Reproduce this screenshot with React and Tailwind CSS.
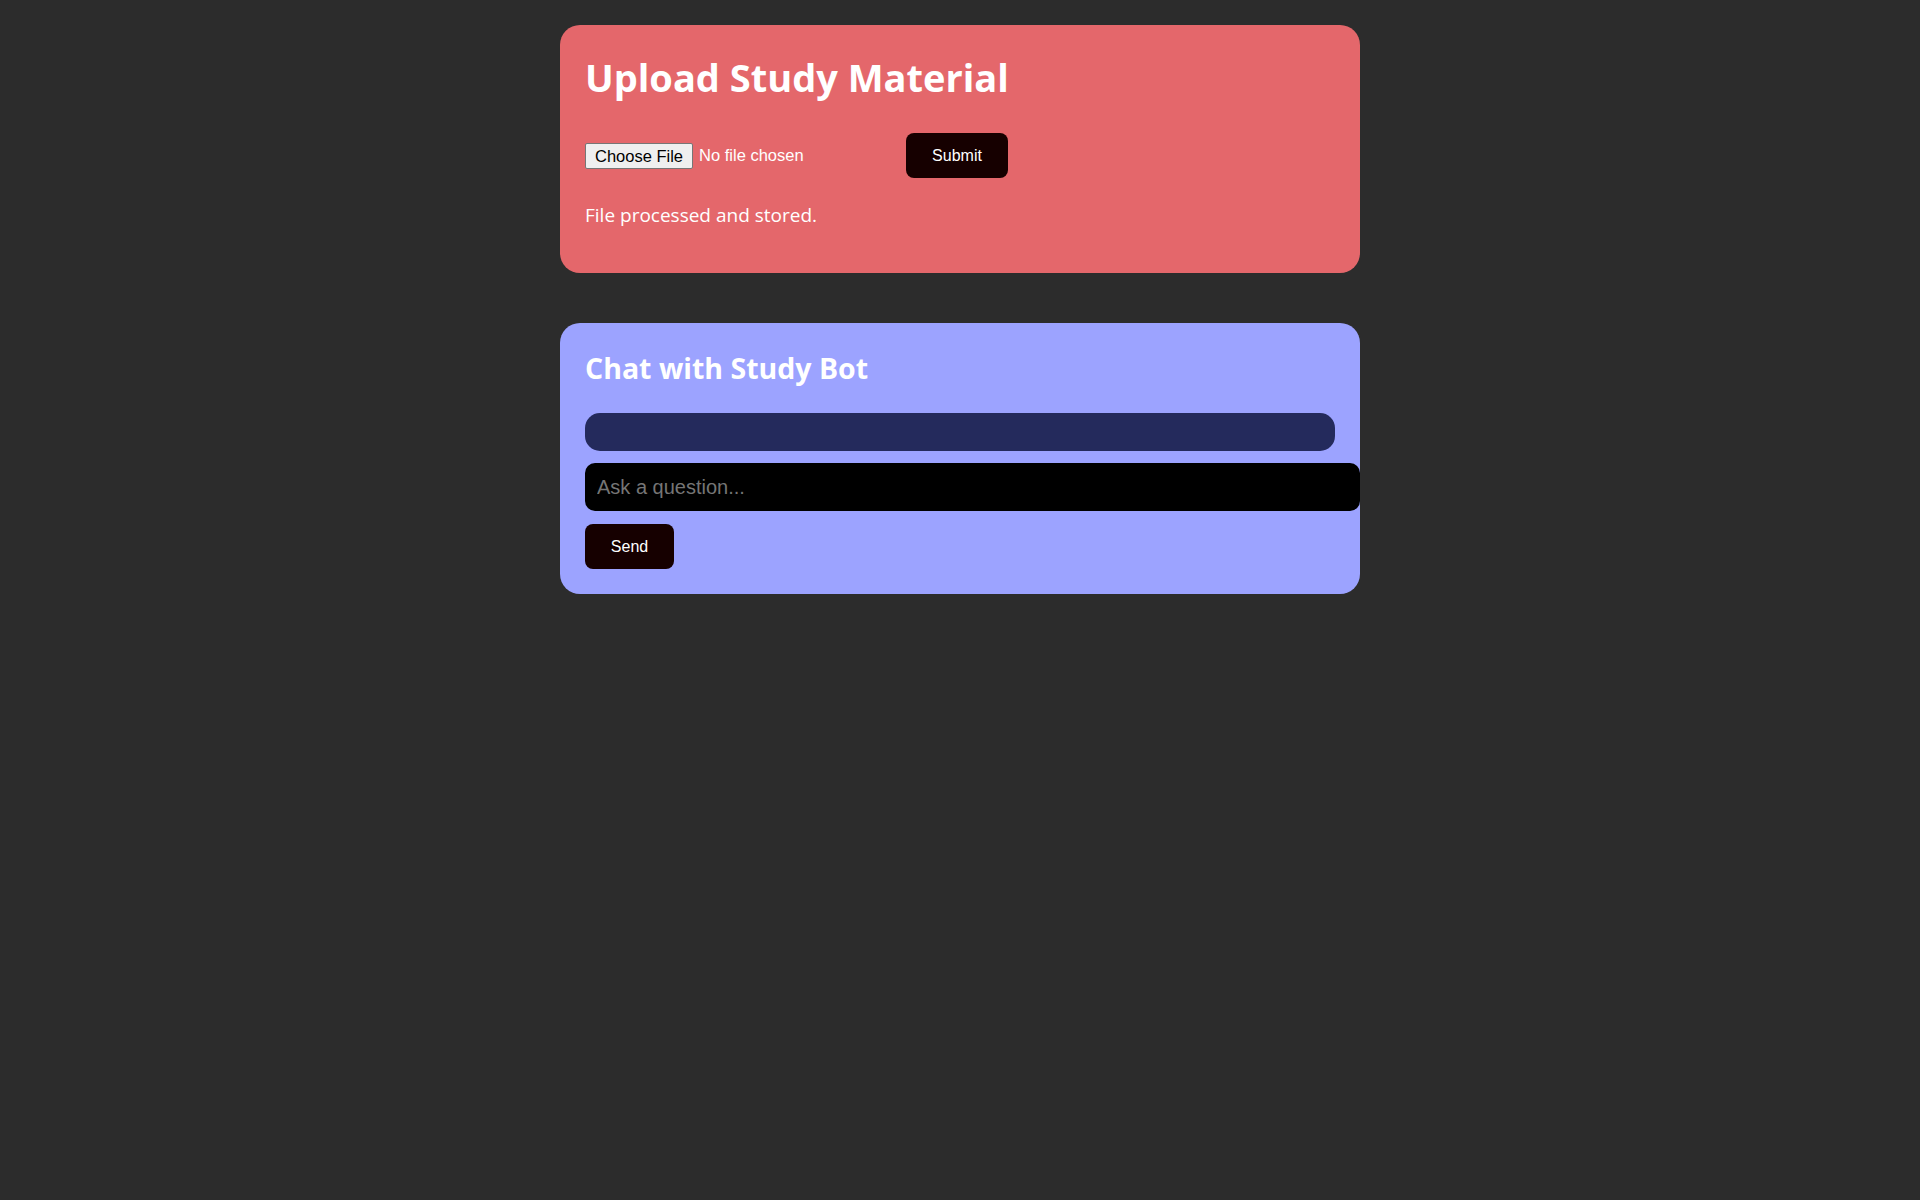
export default function App() {
  return (
    <div className="min-h-screen bg-[#2c2c2c] pt-[25px] font-['Open_Sans',sans-serif] text-white">
      <section className="mx-auto w-[800px] rounded-[20px] bg-[#e4676b] px-[25px] pt-[25px] pb-[25px]">
        <h1 className="mt-[4px] text-[38px] leading-[47px] font-bold">Upload Study Material</h1>
        <form className="mt-[32px] flex h-[45px] items-center" onSubmit={(e) => e.preventDefault()}>
          <label className="flex w-[321px] flex-none cursor-pointer items-center font-['Liberation_Sans',Arial,sans-serif] text-[16.5px]">
            <input type="file" className="hidden" />
            <span className="h-[26px] rounded-[2px] border border-[#767676] bg-[#efefef] px-[9px] leading-[24px] text-black">
              Choose File
            </span>
            <span className="ml-[6px]">No file chosen</span>
          </label>
          <button className="h-[45px] w-[102px] rounded-[8px] bg-[#160000] font-['Liberation_Sans',Arial,sans-serif] text-[16px] text-white">
            Submit
          </button>
        </form>
        <p className="mt-[25px] mb-[20px] text-[19px] leading-[25px]">File processed and stored.</p>
      </section>

      <section className="mx-auto mt-[50px] w-[800px] rounded-[20px] bg-[#9ca3ff] px-[25px] pt-[25px] pb-[25px]">
        <h2 className="mt-[3px] text-[28.5px] leading-[35px] font-bold">Chat with Study Bot</h2>
        <div className="mt-[27px] h-[38px] w-full rounded-[15px] bg-[#242a5c]"></div>
        <input
          type="text"
          placeholder="Ask a question..."
          className="mt-[12px] block h-[48px] w-[775px] rounded-[10px] bg-black px-[12px] font-['Liberation_Sans',Arial,sans-serif] text-[20px] text-white outline-none placeholder:text-[#757575]"
        />
        <button className="mt-[13px] block h-[45px] w-[89px] rounded-[8px] bg-[#160000] font-['Liberation_Sans',Arial,sans-serif] text-[16px] text-white">
          Send
        </button>
      </section>
    </div>
  );
}
